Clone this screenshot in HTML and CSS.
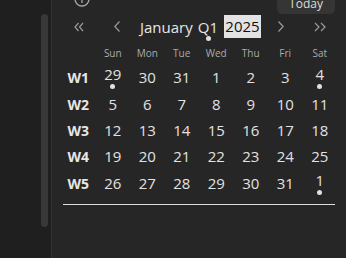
FILE: index.html
```html
<!DOCTYPE html>
<html>
<head>
<meta charset="utf-8">
<link rel="stylesheet" href="styles.css">
</head>
<body>
<div class="app">
  <aside class="sidebar"><div class="thumb"></div></aside>
  <main class="panel">
    <div class="topbar">
      <svg class="info" width="16" height="16" viewBox="0 0 16 16"><circle cx="8" cy="8" r="7" fill="none" stroke="#a8a8a8" stroke-width="1.3"/><line x1="8" y1="7" x2="8" y2="12" stroke="#a8a8a8" stroke-width="1.3"/></svg>
      <button class="today">Today</button>
    </div>
    <div class="nav">
      <span class="nb prev2"><svg width="10" height="10" viewBox="0 0 10 10"><path d="M4.5 1 L1 5 L4.5 9 M9 1 L5.5 5 L9 9" fill="none" stroke="#9a9a9a" stroke-width="1.2"/></svg></span>
      <span class="nb prev"><svg width="6" height="11" viewBox="0 0 6 11"><path d="M5.5 0.5 L0.8 5.5 L5.5 10.5" fill="none" stroke="#9a9a9a" stroke-width="1.2"/></svg></span>
      <span class="month">January</span>
      <span class="quarter">Q1<span class="qdot"></span></span>
      <span class="year">2025</span>
      <span class="nb next"><svg width="6" height="11" viewBox="0 0 6 11"><path d="M0.5 0.5 L5.2 5.5 L0.5 10.5" fill="none" stroke="#9a9a9a" stroke-width="1.2"/></svg></span>
      <span class="nb next2"><svg width="12" height="10" viewBox="0 0 12 10"><path d="M1 1 L5 5 L1 9 M7 1 L11 5 L7 9" fill="none" stroke="#9a9a9a" stroke-width="1.2"/></svg></span>
    </div>
    <div class="cal">
      <div class="hd"></div>
      <div class="hd">Sun</div><div class="hd">Mon</div><div class="hd">Tue</div><div class="hd">Wed</div><div class="hd">Thu</div><div class="hd">Fri</div><div class="hd">Sat</div>

      <div class="wk">W1</div>
      <div class="cell dotted"><span class="num">29</span><span class="dot"></span></div>
      <div class="cell"><span class="num">30</span></div>
      <div class="cell"><span class="num">31</span></div>
      <div class="cell"><span class="num">1</span></div>
      <div class="cell"><span class="num">2</span></div>
      <div class="cell"><span class="num">3</span></div>
      <div class="cell dotted"><span class="num">4</span><span class="dot"></span></div>

      <div class="wk">W2</div>
      <div class="cell"><span class="num">5</span></div>
      <div class="cell"><span class="num">6</span></div>
      <div class="cell"><span class="num">7</span></div>
      <div class="cell"><span class="num">8</span></div>
      <div class="cell"><span class="num">9</span></div>
      <div class="cell"><span class="num">10</span></div>
      <div class="cell"><span class="num">11</span></div>

      <div class="wk">W3</div>
      <div class="cell"><span class="num">12</span></div>
      <div class="cell"><span class="num">13</span></div>
      <div class="cell"><span class="num">14</span></div>
      <div class="cell"><span class="num">15</span></div>
      <div class="cell"><span class="num">16</span></div>
      <div class="cell"><span class="num">17</span></div>
      <div class="cell"><span class="num">18</span></div>

      <div class="wk">W4</div>
      <div class="cell"><span class="num">19</span></div>
      <div class="cell"><span class="num">20</span></div>
      <div class="cell"><span class="num">21</span></div>
      <div class="cell"><span class="num">22</span></div>
      <div class="cell"><span class="num">23</span></div>
      <div class="cell"><span class="num">24</span></div>
      <div class="cell"><span class="num">25</span></div>

      <div class="wk">W5</div>
      <div class="cell"><span class="num">26</span></div>
      <div class="cell"><span class="num">27</span></div>
      <div class="cell"><span class="num">28</span></div>
      <div class="cell"><span class="num">29</span></div>
      <div class="cell"><span class="num">30</span></div>
      <div class="cell"><span class="num">31</span></div>
      <div class="cell dotted"><span class="num">1</span><span class="dot"></span></div>
    </div>
    <div class="rule"></div>
  </main>
</div>
</body>
</html>
```
FILE: styles.css
```css
* { box-sizing: border-box; }
html, body {
  margin: 0;
  padding: 0;
  height: 258px;
  overflow: hidden;
  background: #262626;
  font-family: "Open Sans", "Noto Sans", sans-serif;
  color: #e2e2e2;
}
.app {
  display: flex;
  height: 258px;
}
.sidebar {
  width: 52px;
  flex: none;
  background: #1f1f1f;
  border-right: 1px solid #333333;
  padding-top: 14px;
}
.thumb {
  margin-left: 41px;
  width: 7px;
  height: 213px;
  border-radius: 4px;
  background: #383838;
}
.panel {
  flex: 1;
  padding: 0 11px;
  background: #262626;
}
.topbar {
  display: flex;
  justify-content: space-between;
  align-items: flex-start;
  margin-top: -8px;
  height: 22px;
}
.info {
  margin-left: 11px;
  margin-top: -1px;
}
.today {
  width: 58px;
  height: 22px;
  border: none;
  border-radius: 5px;
  background: #353535;
  color: #dcdcdc;
  font-family: "Open Sans", sans-serif;
  font-size: 12px;
  padding: 0;
  padding-top: 1px;
}
.nav {
  display: flex;
  align-items: center;
  height: 23px;
  margin-top: 1px;
  font-size: 15px;
}
.nb { display: flex; align-items: center; }
.prev2 { margin-left: 11px; }
.prev { margin-left: 30px; }
.month { margin-left: 20px; color: #e6e6e6; }
.quarter {
  margin-left: 5px;
  position: relative;
  color: #e6e6e6;
}
.qdot {
  position: absolute;
  left: 8px;
  top: 19px;
  width: 5px;
  height: 5px;
  border-radius: 50%;
  background: #e0e0e0;
}
.year {
  margin-left: 6px;
  width: 37px;
  height: 23px;
  line-height: 23px;
  text-align: center;
  background: #e3e3e3;
  color: #111111;
}
.next { margin-left: 17px; }
.next2 { margin-left: 30px; }
.cal {
  display: grid;
  grid-template-columns: repeat(8, 1fr);
  margin: 8px -2px 0;
  align-items: center;
}
.hd {
  font-size: 10px;
  line-height: 14px;
  height: 17px;
  padding-bottom: 3px;
  text-align: center;
  color: #ababab;
}
.wk {
  font-weight: 700;
  font-size: 14px;
  text-align: center;
  color: #e6e6e6;
}
.cell {
  display: flex;
  flex-direction: column;
  align-items: center;
  padding: 4px 0;
  font-size: 15px;
}
.cell.dotted { padding: 2px 0; }
.num { line-height: 18px; }
.dot {
  width: 5px;
  height: 5px;
  margin-top: 1px;
  border-radius: 50%;
  background: #e0e0e0;
}
.rule {
  margin-top: 7px;
  height: 1px;
  background: #dedede;
}
```
